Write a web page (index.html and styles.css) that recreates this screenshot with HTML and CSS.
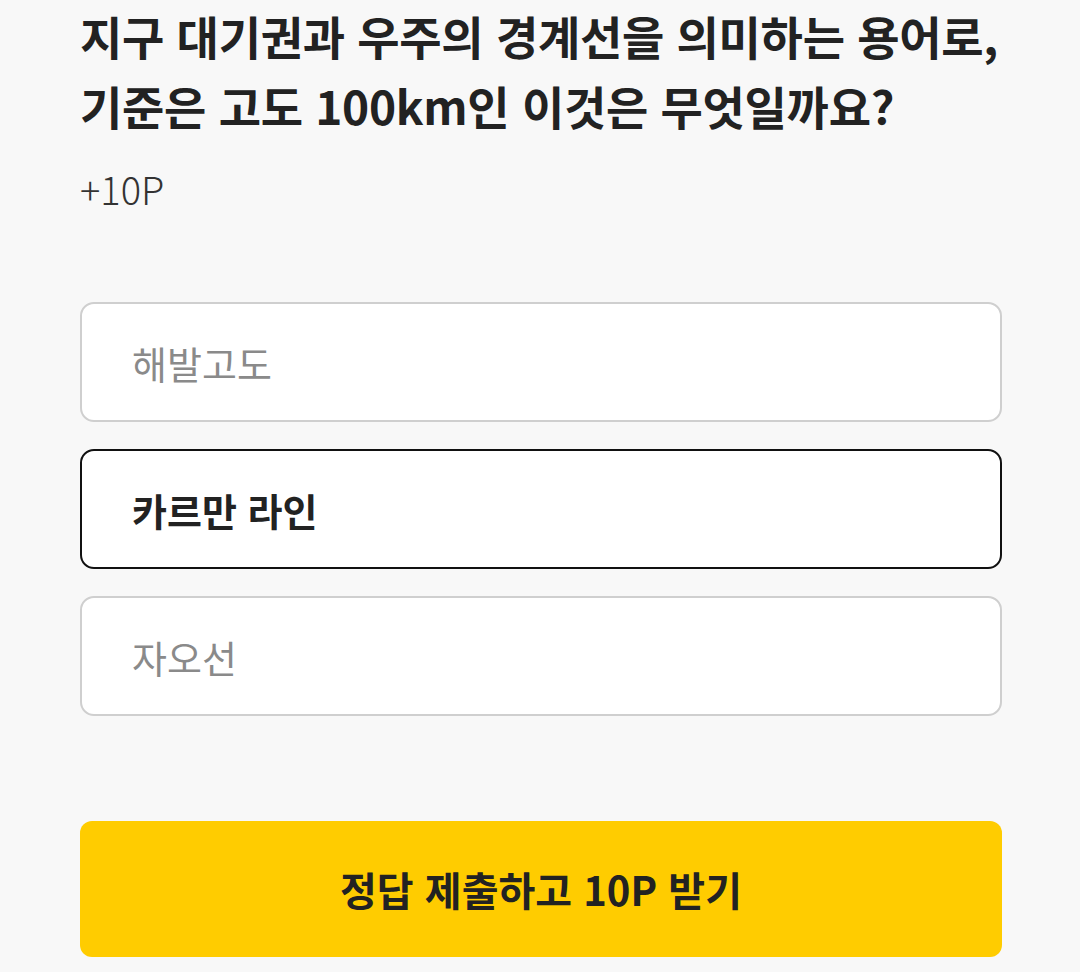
FILE: index.html
```html
<!DOCTYPE html>
<html lang="ko">
<head>
  <meta charset="UTF-8" />
  <meta name="viewport" content="width=device-width, initial-scale=1.0"/>
  <title>퀴즈</title>
  <link rel="stylesheet" href="styles.css">
</head>
<body>

  <div class="quiz">
    <h1 class="question">지구 대기권과 우주의 경계선을 의미하는 용어로,<br>기준은 고도 100km인 이것은 무엇일까요?</h1>
    <p class="reward">+10P</p>

    <div class="options">
      <div class="option">해발고도</div>
      <div class="option selected">카르만 라인</div>
      <div class="option">자오선</div>
    </div>

    <button class="submit">정답 제출하고 10P 받기</button>
  </div>

</body>
</html>
```

FILE: styles.css
```css
body {
  font-family: "Noto Sans CJK KR", "Noto Sans", sans-serif;
  background: #f8f8f8;
  color: #222;
  margin: 0;
  padding: 0;
}

.quiz {
  padding: 0 78px 0 80px;
}

.question {
  margin: 0;
  font-size: 46px;
  font-weight: 700;
  line-height: 70px;
  letter-spacing: -0.3px;
  white-space: nowrap;
  color: #222;
}

.reward {
  margin: 24px 0 0;
  font-size: 38px;
  font-weight: 300;
  line-height: 50px;
  color: #333;
}

.options {
  display: flex;
  flex-direction: column;
  gap: 27px;
  margin-top: 88px;
}

.option {
  box-sizing: border-box;
  height: 120px;
  display: flex;
  align-items: center;
  padding-left: 50px;
  background: #fff;
  border: 2px solid #cfcfcf;
  border-radius: 14px;
  font-size: 38px;
  color: #8a8a8a;
}

.option.selected {
  border-color: #111;
  color: #222;
  font-weight: 700;
}

.submit {
  display: block;
  width: 100%;
  height: 136px;
  margin-top: 105px;
  border: none;
  border-radius: 12px;
  background: #ffcc00;
  font-family: inherit;
  font-size: 40px;
  font-weight: 700;
  color: #222;
}
```
